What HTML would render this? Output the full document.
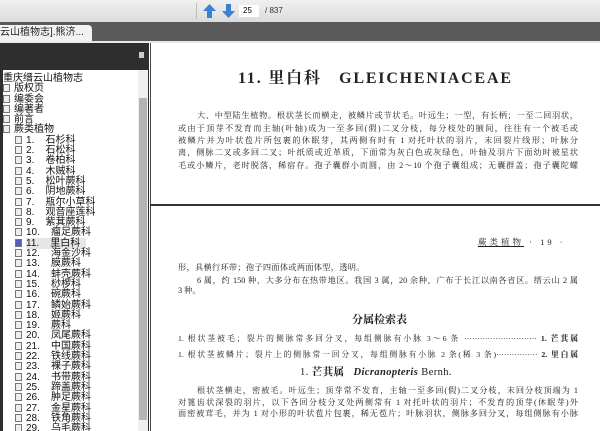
<!DOCTYPE html>
<html><head><meta charset="utf-8"><style>
*{margin:0;padding:0;box-sizing:border-box}
body{width:600px;height:431px;overflow:hidden;position:relative;background:#fff;font-family:"Liberation Sans","Noto Sans CJK SC",sans-serif}
.abs{position:absolute}
.tb{left:0;top:0;width:600px;height:22px;background:linear-gradient(#f0f0f0,#dcdcdc)}
.dark{left:0;top:22px;width:600px;height:19px;background:#5a5a5a}
.tab{left:0;top:25px;width:92px;height:16px;background:#f2f2f2;font-size:10px;line-height:16px;color:#222;white-space:nowrap;overflow:hidden;border-top-right-radius:4px}
.sep{left:0;top:41px;width:600px;height:2px;background:#e8e8e8}
.lp{left:0;top:43px;width:149px;height:388px;background:#2e2e2e}
.tree{left:3px;top:70px;width:135px;height:361px;background:#fff;font-size:10px;color:#111;line-height:10.3px;overflow:hidden;padding-top:4px}
.sb{left:138px;top:70px;width:10px;height:361px;background:#f0f0f0}
.thumb{left:139px;top:98px;width:8px;height:322px;background:#b4b4b4}
.it{height:10.3px;white-space:nowrap;position:relative}
.cb{display:inline-block;width:7px;height:8px;border:1px solid #777;background:#eee;vertical-align:-1px;margin-right:4px}
.page{left:150px;top:43px;width:450px;height:388px;border-left:1px solid #444}
.pb{left:150px;top:204px;width:450px;height:2px;background:#333}
.t{position:absolute;font-family:"Liberation Serif","Noto Serif CJK SC",serif;color:#222;white-space:nowrap;line-height:10px}
.p{font-size:8.2px;left:178px;width:400px;text-align:justify;text-align-last:justify;white-space:normal;height:10px;overflow:hidden}
.ind{left:197px;width:381px}
</style></head><body>
<div class="abs tb"></div>
<div class="abs" style="left:196px;top:3px;width:1px;height:16px;background:#bbb"></div>
<div class="abs" style="left:203px;top:4px;width:13px;height:14px"><svg width="13" height="14"><path d="M6.5 0L13 7H9V14H4V7H0Z" fill="#3b7fd6"/></svg></div>
<div class="abs" style="left:222px;top:4px;width:13px;height:14px"><svg width="13" height="14"><path d="M6.5 14L13 7H9V0H4V7H0Z" fill="#3b7fd6"/></svg></div>
<div class="abs" style="left:239px;top:5px;width:20px;height:12px;background:#fff;font-size:8px;line-height:12px;padding-left:4px">25</div>
<div class="abs" style="left:265px;top:5px;font-size:8px;line-height:12px;color:#333">/ 837</div>
<div class="abs dark"></div>
<div class="abs tab">云山植物志].熊济... &nbsp;&nbsp;<b>✕</b></div>
<div class="abs sep"></div>
<div class="abs lp"></div>
<div class="abs" style="left:139px;top:52px;width:5px;height:6px;background:#ccc"></div>
<div class="abs tree">
<div class="it">重庆缙云山植物志</div>
<div class="it"><span class="cb"></span>版权页</div>
<div class="it"><span class="cb"></span>编委会</div>
<div class="it"><span class="cb"></span>编著者</div>
<div class="it"><span class="cb"></span>前言</div>
<div class="it"><span class="cb"></span>蕨类植物</div>
<div class="it" style="padding-left:12px"><span class="cb"></span>1.&nbsp;&nbsp;&nbsp;&nbsp;石杉科</div>
<div class="it" style="padding-left:12px"><span class="cb"></span>2.&nbsp;&nbsp;&nbsp;&nbsp;石松科</div>
<div class="it" style="padding-left:12px"><span class="cb"></span>3.&nbsp;&nbsp;&nbsp;&nbsp;卷柏科</div>
<div class="it" style="padding-left:12px"><span class="cb"></span>4.&nbsp;&nbsp;&nbsp;&nbsp;木贼科</div>
<div class="it" style="padding-left:12px"><span class="cb"></span>5.&nbsp;&nbsp;&nbsp;&nbsp;松叶蕨科</div>
<div class="it" style="padding-left:12px"><span class="cb"></span>6.&nbsp;&nbsp;&nbsp;&nbsp;阴地蕨科</div>
<div class="it" style="padding-left:12px"><span class="cb"></span>7.&nbsp;&nbsp;&nbsp;&nbsp;瓶尔小草科</div>
<div class="it" style="padding-left:12px"><span class="cb"></span>8.&nbsp;&nbsp;&nbsp;&nbsp;观音座莲科</div>
<div class="it" style="padding-left:12px"><span class="cb"></span>9.&nbsp;&nbsp;&nbsp;&nbsp;紫萁蕨科</div>
<div class="it" style="padding-left:12px"><span class="cb"></span>10.&nbsp;&nbsp;&nbsp;&nbsp;瘤足蕨科</div>
<div class="it" style="padding-left:12px"><span class="cb" style="background:#5060c0"></span><span style="background:#e6e6e6">11.&nbsp;&nbsp;&nbsp;&nbsp;里白科&nbsp;&nbsp;</span></div>
<div class="it" style="padding-left:12px"><span class="cb"></span>12.&nbsp;&nbsp;&nbsp;&nbsp;海金沙科</div>
<div class="it" style="padding-left:12px"><span class="cb"></span>13.&nbsp;&nbsp;&nbsp;&nbsp;膜蕨科</div>
<div class="it" style="padding-left:12px"><span class="cb"></span>14.&nbsp;&nbsp;&nbsp;&nbsp;蚌壳蕨科</div>
<div class="it" style="padding-left:12px"><span class="cb"></span>15.&nbsp;&nbsp;&nbsp;&nbsp;桫椤科</div>
<div class="it" style="padding-left:12px"><span class="cb"></span>16.&nbsp;&nbsp;&nbsp;&nbsp;碗蕨科</div>
<div class="it" style="padding-left:12px"><span class="cb"></span>17.&nbsp;&nbsp;&nbsp;&nbsp;鳞始蕨科</div>
<div class="it" style="padding-left:12px"><span class="cb"></span>18.&nbsp;&nbsp;&nbsp;&nbsp;姬蕨科</div>
<div class="it" style="padding-left:12px"><span class="cb"></span>19.&nbsp;&nbsp;&nbsp;&nbsp;蕨科</div>
<div class="it" style="padding-left:12px"><span class="cb"></span>20.&nbsp;&nbsp;&nbsp;&nbsp;凤尾蕨科</div>
<div class="it" style="padding-left:12px"><span class="cb"></span>21.&nbsp;&nbsp;&nbsp;&nbsp;中国蕨科</div>
<div class="it" style="padding-left:12px"><span class="cb"></span>22.&nbsp;&nbsp;&nbsp;&nbsp;铁线蕨科</div>
<div class="it" style="padding-left:12px"><span class="cb"></span>23.&nbsp;&nbsp;&nbsp;&nbsp;裸子蕨科</div>
<div class="it" style="padding-left:12px"><span class="cb"></span>24.&nbsp;&nbsp;&nbsp;&nbsp;书带蕨科</div>
<div class="it" style="padding-left:12px"><span class="cb"></span>25.&nbsp;&nbsp;&nbsp;&nbsp;蹄盖蕨科</div>
<div class="it" style="padding-left:12px"><span class="cb"></span>26.&nbsp;&nbsp;&nbsp;&nbsp;肿足蕨科</div>
<div class="it" style="padding-left:12px"><span class="cb"></span>27.&nbsp;&nbsp;&nbsp;&nbsp;金星蕨科</div>
<div class="it" style="padding-left:12px"><span class="cb"></span>28.&nbsp;&nbsp;&nbsp;&nbsp;铁角蕨科</div>
<div class="it" style="padding-left:12px"><span class="cb"></span>29.&nbsp;&nbsp;&nbsp;&nbsp;乌毛蕨科</div>
</div>
<div class="abs sb"></div>
<div class="abs thumb"></div>
<div class="abs page"></div>
<div class="abs pb"></div>

<div class="t" style="left:238px;top:70px;font-size:16px;line-height:18px;font-weight:bold;letter-spacing:1.8px">11. 里白科&nbsp;&nbsp;&nbsp;GLEICHENIACEAE</div>
<div class="t p ind" style="top:111px">大、中型陆生植物。根状茎长而横走，被鳞片或节状毛。叶远生；一型，有长柄；一至二回羽状，</div>
<div class="t p" style="top:124px">或由于顶芽不发育而主轴(叶轴)成为一至多回(假)二叉分枝，每分枝处的腋间，往往有一个被毛或</div>
<div class="t p" style="top:136px">被鳞片并为叶状苞片所包裹的休眠芽，其两侧有时有 1 对托叶状的羽片，末回裂片线形；叶脉分</div>
<div class="t p" style="top:148px">离，侧脉二叉或多回二叉；叶纸质或近革质，下面常为灰白色或灰绿色，叶轴及羽片下面幼时被星状</div>
<div class="t p" style="top:161px">毛或小鳞片，老时脱落，稀宿存。孢子囊群小而圆，由 2～10 个孢子囊组成；无囊群盖；孢子囊陀螺</div>

<div class="t" style="left:478px;top:237px;font-size:8.5px;letter-spacing:3px"><span style="text-decoration:underline">蕨类植物</span> · 19 ·</div>
<div class="t" style="left:178px;top:263px;font-size:8.2px;letter-spacing:.3px">形，具横行环带；孢子四面体或两面体型，透明。</div>
<div class="t p ind" style="top:276px">6 属，约 150 种，大多分布在热带地区。我国 3 属，20 余种，广布于长江以南各省区。缙云山 2 属</div>
<div class="t" style="left:178px;top:286px;font-size:8.2px">3 种。</div>
<div class="t" style="left:352px;top:313px;font-size:11px;line-height:14px;font-weight:bold">分属检索表</div>
<div class="t p" style="top:334px;font-size:7.8px">1. 根状茎被毛；裂片的侧脉常多回分叉，每组侧脉有小脉 3～6 条 ···························· <b>1. 芒萁属</b></div>
<div class="t p" style="top:350px;font-size:7.8px">1. 根状茎被鳞片；裂片上的侧脉常一回分叉，每组侧脉有小脉 2 条(稀 3 条)················ <b>2. 里白属</b></div>
<div class="t" style="left:300px;top:367px;font-size:10.5px;line-height:12px;letter-spacing:.4px">1. <b>芒萁属</b>&nbsp;&nbsp;&nbsp;<b><i>Dicranopteris</i></b> Bernh.</div>
<div class="t p ind" style="top:386px">根状茎横走，密被毛。叶远生；顶芽常不发育，主轴一至多回(假)二叉分枝，末回分枝顶端为 1</div>
<div class="t p" style="top:398px">对篦齿状深裂的羽片，以下各回分枝分叉处两侧常有 1 对托叶状的羽片；不发育的顶芽(休眠芽)外</div>
<div class="t p" style="top:409px">面密被茸毛，并为 1 对小形的叶状苞片包裹，稀无苞片；叶脉羽状，侧脉多回分叉，每组侧脉有小脉</div>
</body></html>
